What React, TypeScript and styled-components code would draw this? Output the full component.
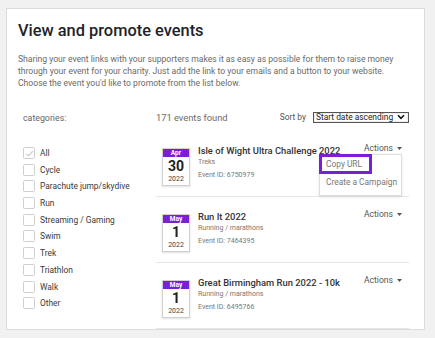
import React from "react";
import styled, { createGlobalStyle } from "styled-components";

const GlobalStyle = createGlobalStyle`
  html, body {
    margin: 0;
    padding: 0;
    background: #f1f1f1;
    font-family: Roboto, "Liberation Sans", Arial, sans-serif;
  }
`;

const Page = styled.div`
  width: 435px;
  height: 338px;
  padding: 8px 10px 0 6px;
  box-sizing: border-box;
  overflow: hidden;
`;

const Card = styled.div`
  background: #fff;
  border: 1px solid #dcdcdc;
  height: 322px;
  box-sizing: border-box;
  padding: 12px 12px 0 11px;
  overflow: hidden;
`;

const Title = styled.h1`
  margin: 0;
  font-size: 16.4px;
  line-height: 20px;
  font-weight: 500;
  color: #1f2328;
`;

const Intro = styled.p`
  margin: 12px 0 0;
  font-size: 8.6px;
  line-height: 12px;
  color: #6a6a6a;
`;

const Content = styled.div`
  display: grid;
  grid-template-columns: 138px 253px;
  margin-top: 23px;
`;

const Sidebar = styled.div`
  padding-left: 5px;
`;

const SideHeading = styled.div`
  font-size: 8.8px;
  line-height: 12px;
  color: #666;
  height: 12px;
`;

const CategoryList = styled.div`
  margin-top: 23px;
  display: flex;
  flex-direction: column;
  gap: 4.7px;
`;

const CategoryRow = styled.label`
  display: flex;
  align-items: center;
  gap: 5px;
  height: 12px;
  font-size: 8.4px;
  color: #3a3a3a;
`;

const Box = styled.span`
  width: 12px;
  height: 12px;
  box-sizing: border-box;
  border: 1px solid #cfcfcf;
  border-radius: 1.5px;
  display: flex;
  align-items: center;
  justify-content: center;
`;

const Main = styled.div``;

const ListHeader = styled.div`
  display: flex;
  align-items: center;
  height: 12px;
  margin-top: -1px;
`;

const Count = styled.div`
  font-size: 9.3px;
  color: #6a6a6a;
  flex: 1;
`;

const SortLabel = styled.div`
  font-size: 8.4px;
  color: #555;
  margin-right: 7px;
`;

const Select = styled.div`
  width: 96px;
  height: 11px;
  box-sizing: border-box;
  border: 1px solid #555;
  box-shadow: inset 0 0 0 1px #eee;
  display: flex;
  align-items: center;
  justify-content: space-between;
  padding: 0 3px 0 2px;
  font-size: 8.4px;
  color: #222;
`;

const EventList = styled.div`
  margin-top: 8px;
`;

const EventItem = styled.div`
  display: flex;
  align-items: flex-start;
  padding: 17px 7px 10px 6px;
  border-bottom: 1px solid #e6e6e6;
`;

const DateBadge = styled.div`
  width: 28px;
  height: 38px;
  box-sizing: border-box;
  border: 1px solid #cfcfcf;
  box-shadow: 0 1px 2px rgba(0, 0, 0, 0.12);
  display: flex;
  flex-direction: column;
  align-items: center;
  flex-shrink: 0;
`;

const Month = styled.div`
  align-self: stretch;
  height: 8px;
  background: #7a1fd6;
  color: #fff;
  font-size: 6.5px;
  font-weight: 700;
  line-height: 8px;
  text-align: center;
`;

const Day = styled.div`
  font-size: 14px;
  font-weight: 700;
  line-height: 16px;
  color: #222;
  margin-top: 1px;
`;

const Year = styled.div`
  font-size: 7px;
  line-height: 10px;
  color: #444;
`;

const Info = styled.div`
  flex: 1;
  margin-left: 8px;
  margin-top: -3px;
`;

const EventName = styled.div`
  font-size: 9.4px;
  font-weight: 500;
  line-height: 12px;
  color: #333;
  white-space: nowrap;
`;

const Meta = styled.div<{ $gap?: number }>`
  font-size: 7px;
  line-height: 9px;
  color: #777;
  margin-top: ${(p) => p.$gap ?? 0}px;
`;

const ActionsWrap = styled.div`
  position: relative;
  margin-top: -5px;
  flex-shrink: 0;
`;

const ActionsButton = styled.div`
  font-size: 8.6px;
  line-height: 11px;
  color: #555;
  display: flex;
  align-items: center;
  gap: 4px;
`;

const Menu = styled.div`
  position: absolute;
  top: 100%;
  right: 0;
  width: 83px;
  height: 42px;
  box-sizing: border-box;
  background: #fff;
  border: 1px solid #ddd;
  box-shadow: 0 1px 3px rgba(0, 0, 0, 0.1);
  z-index: 2;
`;

const MenuItem = styled.div<{ $highlight?: boolean }>`
  font-size: 8.4px;
  line-height: 12px;
  color: #777;
  padding: ${(p) => (p.$highlight ? "1px 4px" : "2px 6px")};
  white-space: nowrap;
  ${(p) =>
    p.$highlight &&
    `
    border: 3px solid #7a1fd6;
    width: 53px;
    box-sizing: border-box;
    margin: -1px 0 0 -1px;
  `}
`;

const categories = [
  "All",
  "Cycle",
  "Parachute jump/skydive",
  "Run",
  "Streaming / Gaming",
  "Swim",
  "Trek",
  "Triathlon",
  "Walk",
  "Other",
];

const events = [
  {
    month: "Apr",
    day: "30",
    name: "Isle of Wight Ultra Challenge 2022",
    type: "Treks",
    id: "6750979",
    open: true,
  },
  {
    month: "May",
    day: "1",
    name: "Run It 2022",
    type: "Running / marathons",
    id: "7464395",
    open: false,
  },
  {
    month: "May",
    day: "1",
    name: "Great Birmingham Run 2022 - 10k",
    type: "Running / marathons",
    id: "6495766",
    open: false,
  },
];

const Check = () => (
  <svg width="9" height="9" viewBox="0 0 10 10">
    <path d="M1.5 5.2 L4 7.6 L8.6 2.4" fill="none" stroke="#c4c4c4" strokeWidth="1.2" />
  </svg>
);

const Caret = () => (
  <svg width="5" height="3" viewBox="0 0 5 3">
    <path d="M0 0 H5 L2.5 3 Z" fill="#555" />
  </svg>
);

const Chevron = () => (
  <svg width="8" height="6" viewBox="0 0 8 6">
    <path d="M1 1.2 L4 4.4 L7 1.2" fill="none" stroke="#111" strokeWidth="1.6" />
  </svg>
);

export default function App() {
  return (
    <Page>
      <GlobalStyle />
      <Card>
        <Title>View and promote events</Title>
        <Intro>
          Sharing your event links with your supporters makes it as easy as possible for them to raise money
          through your event for your charity. Just add the link to your emails and a button to your website.
          Choose the event you'd like to promote from the list below.
        </Intro>
        <Content>
          <Sidebar>
            <SideHeading>categories:</SideHeading>
            <CategoryList>
              {categories.map((c, i) => (
                <CategoryRow key={c}>
                  <Box>{i === 0 ? <Check /> : null}</Box>
                  {c}
                </CategoryRow>
              ))}
            </CategoryList>
          </Sidebar>
          <Main>
            <ListHeader>
              <Count>171 events found</Count>
              <SortLabel>Sort by</SortLabel>
              <Select>
                Start date ascending
                <Chevron />
              </Select>
            </ListHeader>
            <EventList>
              {events.map((e) => (
                <EventItem key={e.id}>
                  <DateBadge>
                    <Month>{e.month}</Month>
                    <Day>{e.day}</Day>
                    <Year>2022</Year>
                  </DateBadge>
                  <Info>
                    <EventName>{e.name}</EventName>
                    <Meta $gap={1}>{e.type}</Meta>
                    <Meta $gap={4}>Event ID: {e.id}</Meta>
                  </Info>
                  <ActionsWrap>
                    <ActionsButton>
                      Actions <Caret />
                    </ActionsButton>
                    {e.open ? (
                      <Menu>
                        <MenuItem $highlight>Copy URL</MenuItem>
                        <MenuItem>Create a Campaign</MenuItem>
                      </Menu>
                    ) : null}
                  </ActionsWrap>
                </EventItem>
              ))}
            </EventList>
          </Main>
        </Content>
      </Card>
    </Page>
  );
}
